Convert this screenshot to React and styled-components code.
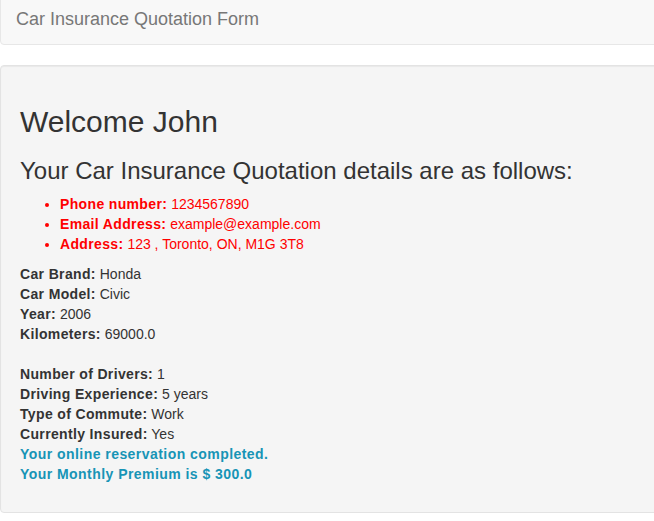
import React from "react";
import styled, { createGlobalStyle } from "styled-components";

const GlobalStyle = createGlobalStyle`
  html, body {
    margin: 0;
    padding: 0;
    background: #ffffff;
  }
  body {
    font-family: "Liberation Sans", Arial, sans-serif;
    font-size: 14px;
    line-height: 20px;
    color: #333333;
    overflow: hidden;
  }
  b {
    letter-spacing: 0.35px;
  }
`;

const Page = styled.div`
  width: 100%;
  overflow: hidden;
`;

const Navbar = styled.nav`
  display: flex;
  align-items: center;
  height: 50px;
  margin: -7px -10px 20px 0;
  background: #f8f8f8;
  border: 1px solid #e7e7e7;
  border-radius: 4px;
`;

const Brand = styled.span`
  padding: 15px;
  font-size: 18px;
  line-height: 20px;
  color: #777777;
`;

const Well = styled.section`
  margin-right: -10px;
  padding: 19px 19px 18px;
  background: #f5f5f5;
  border: 1px solid #e3e3e3;
  border-radius: 4px;
  box-shadow: inset 0 1px 1px rgba(0, 0, 0, 0.05);
`;

const Title = styled.h1`
  margin: 20px 0 10px;
  font-size: 30px;
  font-weight: 500;
  line-height: 1.1;
`;

const Subtitle = styled.h3`
  margin: 20px 0 10px;
  font-size: 24px;
  font-weight: 500;
  line-height: 1.1;
`;

const ContactList = styled.ul`
  margin: 0 0 10px;
  padding-left: 40px;
  color: #ff0000;
`;

const Details = styled.div`
  margin-bottom: 10px;
`;

const Line = styled.div`
  color: ${(p) => (p.$info ? "#1794b6" : "inherit")};
  font-weight: ${(p) => (p.$info ? 700 : 400)};
  letter-spacing: ${(p) => (p.$info ? "0.45px" : "normal")};
`;

const Gap = styled.div`
  height: 20px;
`;

const contacts = [
  ["Phone number:", "1234567890"],
  ["Email Address:", "example@example.com"],
  ["Address:", "123 , Toronto, ON, M1G 3T8"],
];

const car = [
  ["Car Brand:", "Honda"],
  ["Car Model:", "Civic"],
  ["Year:", "2006"],
  ["Kilometers:", "69000.0"],
];

const driver = [
  ["Number of Drivers:", "1"],
  ["Driving Experience:", "5 years"],
  ["Type of Commute:", "Work"],
  ["Currently Insured:", "Yes"],
];

const printLines = (rows) =>
  rows.map(([label, value]) => (
    <Line key={label}>
      <b>{label}</b> {value}
    </Line>
  ));

const App = () => {
  return (
    <Page>
      <GlobalStyle />
      <Navbar>
        <Brand>Car Insurance Quotation Form</Brand>
      </Navbar>
      <Well>
        <Title>Welcome John</Title>
        <Subtitle>Your Car Insurance Quotation details are as follows:</Subtitle>
        <ContactList>
          {contacts.map(([label, value]) => (
            <li key={label}>
              <b>{label}</b> {value}
            </li>
          ))}
        </ContactList>
        <Details>
          {printLines(car)}
          <Gap />
          {printLines(driver)}
          <Line $info>Your online reservation completed.</Line>
          <Line $info>Your Monthly Premium is $ 300.0</Line>
        </Details>
      </Well>
    </Page>
  );
};

export default App;
